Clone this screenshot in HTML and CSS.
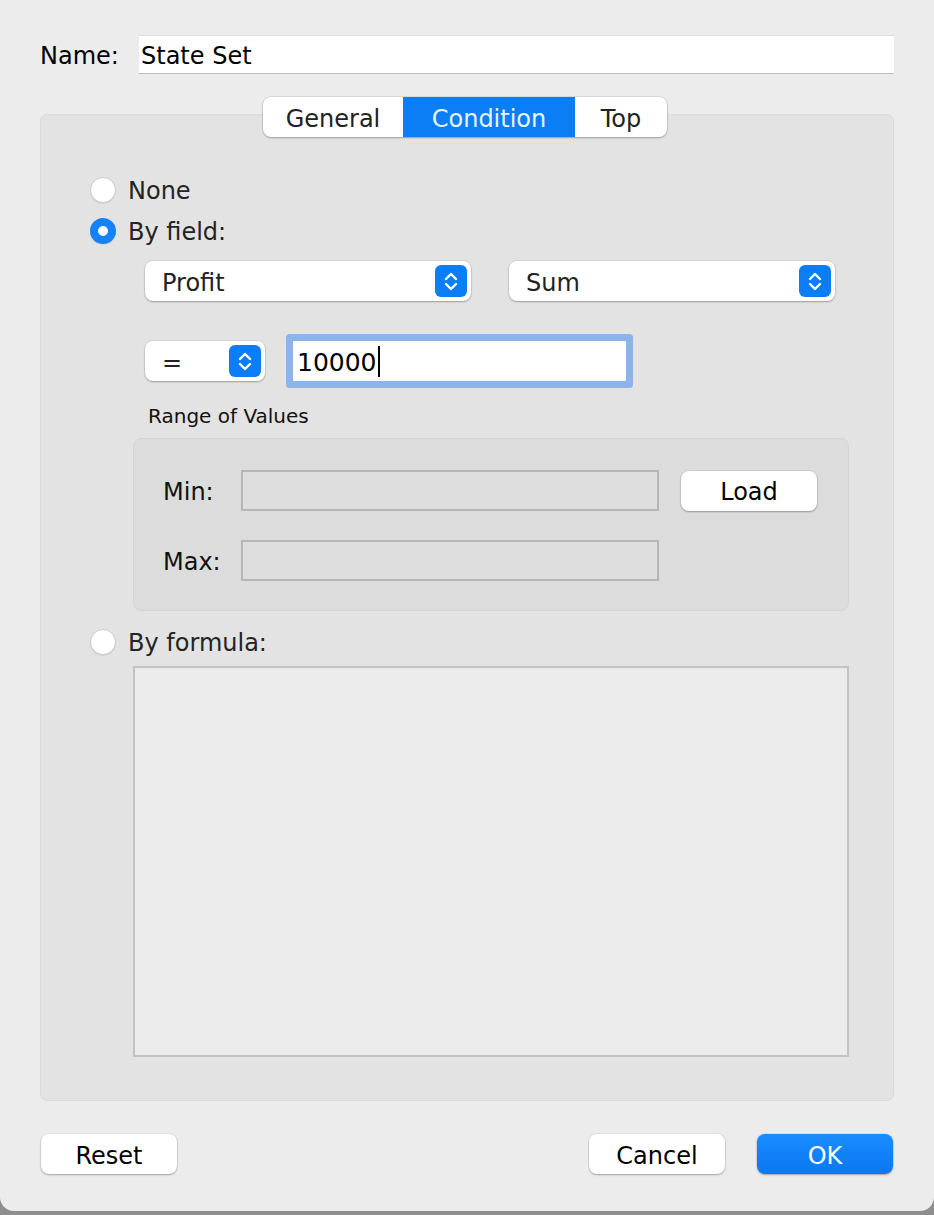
FILE: index.html
```html
<!DOCTYPE html>
<html lang="en">
<head>
  <meta charset="UTF-8">
  <title>State Set</title>
  <link rel="stylesheet" href="styles.css">
</head>
<body>

<div class="window">

  <div class="name-row">
    <span class="name-label">Name:</span>
    <div class="name-field">State Set</div>
  </div>

  <div class="tabview">
    <div class="segmented">
      <span class="seg seg-general">General</span>
      <span class="seg seg-condition active">Condition</span>
      <span class="seg seg-top">Top</span>
    </div>

    <div class="panel">
      <div class="radio-row">
        <span class="radio"></span>
        <span>None</span>
      </div>
      <div class="radio-row">
        <span class="radio checked"></span>
        <span>By field:</span>
      </div>

      <div class="popup-row">
        <div class="popup wide">
          <span>Profit</span>
          <svg class="stepper" viewBox="0 0 32 32" width="32" height="32">
            <rect width="32" height="32" rx="6" fill="#0b7ef6"/>
            <path d="M11 14 L16 9 L21 14 M11 19 L16 24 L21 19" fill="none" stroke="#fff" stroke-width="2.4" stroke-linecap="round" stroke-linejoin="round"/>
          </svg>
        </div>
        <div class="popup wide">
          <span>Sum</span>
          <svg class="stepper" viewBox="0 0 32 32" width="32" height="32">
            <rect width="32" height="32" rx="6" fill="#0b7ef6"/>
            <path d="M11 14 L16 9 L21 14 M11 19 L16 24 L21 19" fill="none" stroke="#fff" stroke-width="2.4" stroke-linecap="round" stroke-linejoin="round"/>
          </svg>
        </div>
      </div>

      <div class="compare-row">
        <div class="popup narrow">
          <span>=</span>
          <svg class="stepper" viewBox="0 0 32 32" width="32" height="32">
            <rect width="32" height="32" rx="6" fill="#0b7ef6"/>
            <path d="M11 14 L16 9 L21 14 M11 19 L16 24 L21 19" fill="none" stroke="#fff" stroke-width="2.4" stroke-linecap="round" stroke-linejoin="round"/>
          </svg>
        </div>
        <div class="value-field">10000<span class="caret"></span></div>
      </div>

      <div class="range-label">Range of Values</div>

      <div class="range-box">
        <div class="range-row">
          <span class="range-name">Min:</span>
          <div class="range-field"></div>
          <div class="button load">Load</div>
        </div>
        <div class="range-row">
          <span class="range-name">Max:</span>
          <div class="range-field"></div>
        </div>
      </div>

      <div class="radio-row formula">
        <span class="radio"></span>
        <span>By formula:</span>
      </div>
      <div class="formula-box"></div>
    </div>
  </div>

  <div class="footer">
    <div class="button">Reset</div>
    <div class="footer-right">
      <div class="button">Cancel</div>
      <div class="button primary">OK</div>
    </div>
  </div>

</div>

</body>
</html>
```

FILE: styles.css
```css
body {
  margin: 0;
  background: #8e8e8e;
  font-family: 'DejaVu Sans', 'Liberation Sans', sans-serif;
  font-size: 24px;
  color: #242424;
}
.window {
  background: #ececec;
  height: 1176px;
  padding: 35px 40px 0 40px;
  border-radius: 0 0 14px 14px;
}
.name-row {
  display: flex;
  align-items: center;
}
.name-label {
  width: 99px;
  color: #000;
  padding-top: 2px;
}
.name-field {
  flex: 1;
  height: 39px;
  box-sizing: border-box;
  line-height: 40px;
  padding-left: 2px;
  background: #fff;
  color: #000;
  border-top: 1px solid #dcdcdc;
  border-bottom: 1px solid #bdbdbd;
}
.tabview {
  margin-top: 23px;
  display: flex;
  flex-direction: column;
  align-items: center;
}
.segmented {
  position: relative;
  z-index: 1;
  display: flex;
  height: 40px;
  margin-right: 4px;
  background: #fff;
  border-radius: 8px;
  box-shadow: 0 0 0 1px rgba(0,0,0,0.07), 0 1px 2px rgba(0,0,0,0.25);
  overflow: hidden;
}
.seg {
  display: flex;
  align-items: center;
  justify-content: center;
  padding-top: 3px;
  color: #222;
}
.seg-general { width: 140px; }
.seg-condition { width: 172px; }
.seg-top { width: 92px; }
.seg.active {
  background: #0b7ef6;
  color: #e8f3ff;
}
.panel {
  align-self: stretch;
  margin-top: -23px;
  height: 987px;
  box-sizing: border-box;
  background: #e3e3e3;
  border: 1px solid #dadada;
  border-radius: 7px;
  padding-top: 54px;
}
.radio-row {
  display: flex;
  align-items: center;
  height: 41px;
  padding-left: 49px;
  gap: 12px;
}
.radio {
  width: 26px;
  height: 26px;
  box-sizing: border-box;
  border-radius: 50%;
  background: #fff;
  border: 1px solid #cbcbcb;
  box-shadow: 0 1px 1px rgba(0,0,0,0.08);
}
.radio.checked {
  border: 8px solid #1581fa;
  background: #fff;
}
.popup-row {
  display: flex;
  gap: 38px;
  margin: 10px 0 0 104px;
}
.popup {
  display: flex;
  align-items: center;
  justify-content: space-between;
  height: 40px;
  box-sizing: border-box;
  padding: 0 4px 0 17px;
  background: #fff;
  border-radius: 8px;
  box-shadow: 0 0 0 1px rgba(0,0,0,0.05), 0 1px 2px rgba(0,0,0,0.28);
  color: #222;
}
.popup span {
  padding-top: 3px;
}
.popup.wide { width: 326px; }
.popup.narrow { width: 120px; }
.stepper {
  display: block;
}
.compare-row {
  display: flex;
  align-items: center;
  gap: 28px;
  margin: 40px 0 0 104px;
}
.value-field {
  width: 333px;
  height: 40px;
  line-height: 43px;
  padding-left: 4px;
  box-sizing: border-box;
  background: #fff;
  color: #000;
  border-radius: 1px;
  box-shadow: 0 0 0 7px #8db3eb;
  font-size: 25px;
}
.caret {
  display: inline-block;
  width: 2px;
  height: 31px;
  margin-left: 1px;
  background: #000;
  vertical-align: -6px;
}
.range-label {
  margin: 23px 0 0 107px;
  font-size: 20px;
  line-height: 24px;
  color: #111;
}
.range-box {
  margin: 10px 0 0 92px;
  width: 716px;
  height: 173px;
  box-sizing: border-box;
  background: #dcdcdc;
  border: 1px solid #d4d4d4;
  border-radius: 8px;
  padding: 31px 0 0 29px;
  display: flex;
  flex-direction: column;
  gap: 29px;
}
.range-row {
  display: flex;
  align-items: center;
}
.range-name {
  width: 78px;
  padding-top: 2px;
  color: #111;
}
.range-field {
  width: 418px;
  height: 41px;
  box-sizing: border-box;
  background: #dedede;
  border: 2px solid #b6b6b6;
}
.button {
  width: 136px;
  height: 40px;
  box-sizing: border-box;
  padding-top: 3px;
  display: flex;
  align-items: center;
  justify-content: center;
  background: #fff;
  color: #000;
  border-radius: 8px;
  box-shadow: 0 0 0 1px rgba(0,0,0,0.05), 0 1px 2px rgba(0,0,0,0.28);
}
.load {
  margin-left: 22px;
}
.radio-row.formula {
  margin-top: 10px;
}
.radio-row span:last-child {
  padding-top: 2px;
}
.formula-box {
  margin: 4px 0 0 92px;
  width: 716px;
  height: 391px;
  box-sizing: border-box;
  background: #ebebeb;
  border: 2px solid #c3c3c3;
}
.footer {
  display: flex;
  justify-content: space-between;
  margin-top: 33px;
  padding: 0 1px;
}
.footer-right {
  display: flex;
  gap: 32px;
}
.button.primary {
  background: linear-gradient(#1b8bff, #0a79f2);
  color: #fff;
}
```
